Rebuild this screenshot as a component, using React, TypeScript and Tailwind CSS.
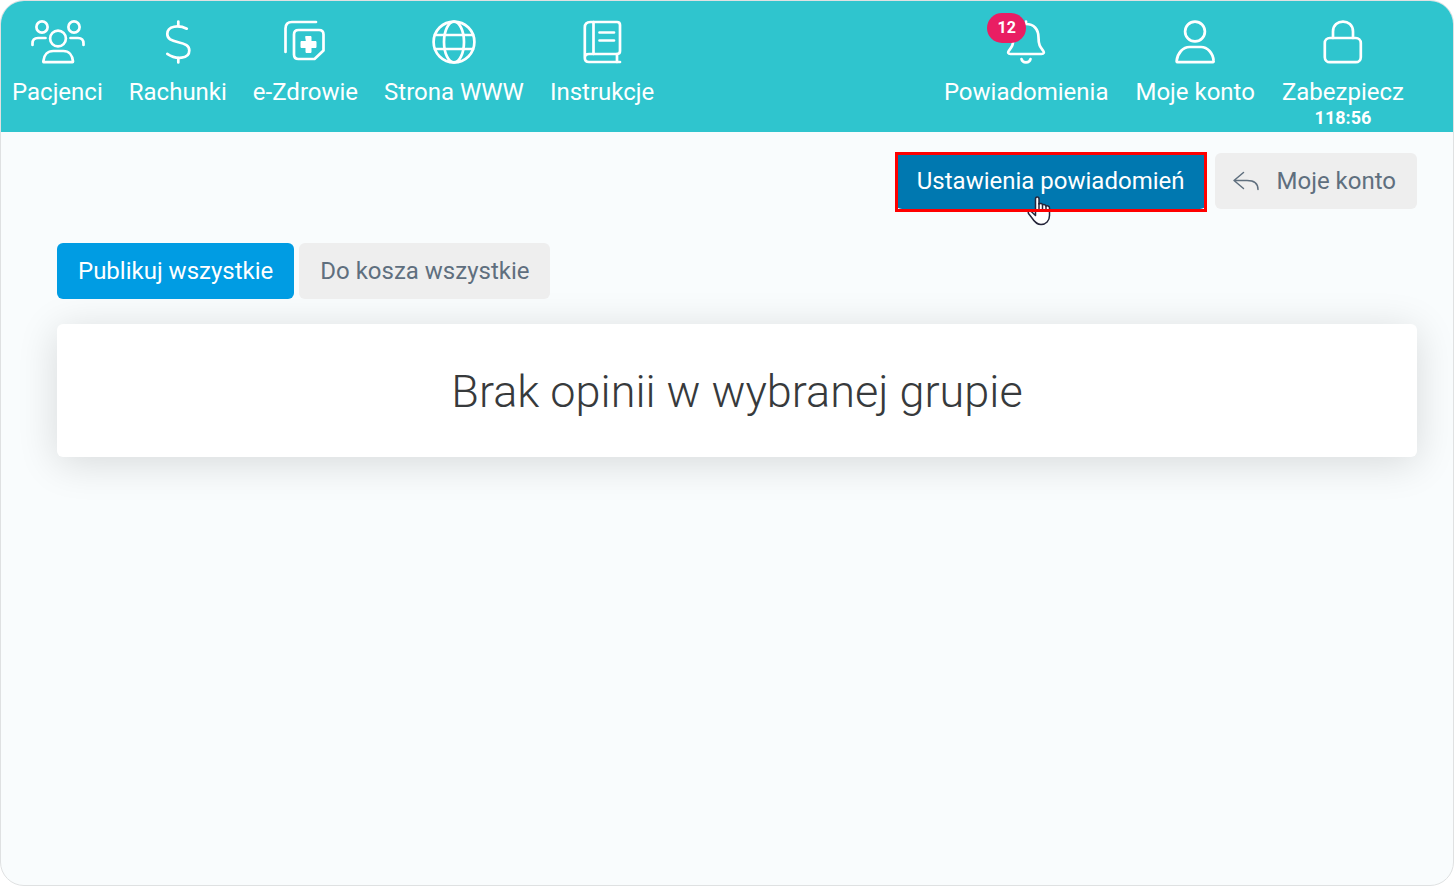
import type { ReactNode } from "react";

function Icon({ children }: { children: ReactNode }) {
  return (
    <svg
      viewBox="0 0 56 44"
      className="block h-11 w-14"
      fill="none"
      stroke="white"
      strokeWidth="2.7"
      strokeLinecap="round"
      strokeLinejoin="round"
      aria-hidden="true"
    >
      {children}
    </svg>
  );
}

const PatientsIcon = (
  <Icon>
    <circle cx="13" cy="7" r="5.6" />
    <circle cx="45" cy="7" r="5.6" />
    <circle cx="29" cy="18.5" r="7.900" />
    <path d="M3.500 25v-1.500q0-5.500 5.500-5.500h7.500M54.500 25v-1.500q0-5.500-5.500-5.500h-7.500" />
    <path d="M14.500 42.200h29q.5 0 .5-.8C43.500 35 39.800 31 34.300 31H24.300c-5.500 0-9.500 4-10 10.400z" />
  </Icon>
);

const DollarIcon = (
  <Icon>
    <path d="M28.300 1.500V6M28.300 38v4.500" />
    <path d="M36.800 8.700C29 5 17.300 5.500 17.300 14c0 5 4 6.700 11 8.200s11 3.300 11 8.300c0 8.500-13 9.500-22 3.300" />
  </Icon>
);

const HealthIcon = (
  <Icon>
    <path d="M8.500 32V8.500Q8.500 2 15 2h24" />
    <path d="M21.500 10H42q4.500 0 4.500 4.500V30.500L37.500 39h-16Q17 39 17 34.500v-20Q17 10 21.500 10z" />
    <path d="M29 16.500h5v5h5v6h-5v5h-5v-5h-5v-6h5z" fill="white" strokeWidth="1" />
  </Icon>
);

const GlobeIcon = (
  <Icon>
    <circle cx="28" cy="22" r="20.400" />
    <ellipse cx="28" cy="22" rx="10" ry="20.400" />
    <path d="M9 15h38M9 29h38" />
  </Icon>
);

const BookIcon = (
  <Icon>
    <path d="M10.800 37.500V7.500Q10.800 2 16.500 2H43q3 0 3 3v26q0 3-3 3H15q-4.200 0-4.200 4t4.200 4h31" />
    <path d="M19.500 2v32M43 34v8M25.500 12.500h14.500M25.500 20.500h14.500" />
  </Icon>
);

const BellIcon = (
  <Icon>
    <path d="M28 1.500V4M28 4c8 0 12.500 5.500 12.500 13.500 0 8 2 10 4.500 13 1.500 2 .8 3.500-1.500 3.500h-31c-2.300 0-3-1.500-1.500-3.500 2.500-3 4.500-5 4.500-13C15.500 9.500 20 4 28 4z" />
    <path d="M23.500 39c1 4.500 8 4.500 9 0" />
  </Icon>
);

const UserIcon = (
  <Icon>
    <circle cx="28" cy="11.500" r="9.900" />
    <path d="M10.500 42.200h35.200c1 0 1-.7.900-1.500C46 33 40.500 27 34 27H22.500C16 27 10.500 33 9.700 40.700c-.1.800-.1 1.500.8 1.500z" />
  </Icon>
);

const LockIcon = (
  <Icon>
    <rect x="9.800" y="18" width="36" height="24.200" rx="5" />
    <path d="M18 18v-6.500c0-13.200 20-13.200 20 0V18" />
  </Icon>
);

function NavItem({
  label,
  icon,
  badge,
  note,
}: {
  label: string;
  icon: ReactNode;
  badge?: string;
  note?: string;
}) {
  return (
    <a href="#" className="flex flex-col items-center text-2xl leading-7 text-white">
      <span className="relative mb-3.5">
        {icon}
        {badge && (
          <span className="absolute -top-[7px] right-7 flex h-[30px] w-[39px] items-center justify-center rounded-full bg-[#e91e63] text-base font-bold">
            {badge}
          </span>
        )}
      </span>
      <span>{label}</span>
      {note && <span className="text-lg leading-6 font-bold">{note}</span>}
    </a>
  );
}

function PointerCursor() {
  return (
    <svg
      viewBox="0 0 24 32"
      className="absolute top-[42px] left-[131px] h-8 w-6"
      fill="white"
      stroke="#25253a"
      strokeWidth="1.500"
      strokeLinejoin="round"
      aria-hidden="true"
    >
      <path d="M8.500 20.500V4c0-2.600 3.500-2.600 3.500 0v5c1-1 3.500-.8 3.500 1 1-.8 3.500-.5 3.500 1.200 1-.7 3.500-.4 3.500 1.800v7.500c0 5.500-3.500 9-8.500 9-4.500 0-6.500-2.500-9-6.500L1.500 18.500c-1-2 1.500-3.300 3-1.700z" />
      <path d="M12 8v7M15.500 10v5M19 11v4" />
    </svg>
  );
}

const button = "flex h-14 items-center rounded-md px-[21px] pb-px text-2xl";

export default function App() {
  return (
    <div
      className="min-h-screen overflow-hidden rounded-3xl border border-[#dfe1e2] bg-[#f9fcfd]"
      style={{ fontFamily: 'Roboto, "Liberation Sans", sans-serif' }}
    >
      <header className="flex items-start justify-between bg-[#2fc5ce] pt-[19px] pr-[49px] pb-0.5 pl-[11px]">
        <nav aria-label="Menu" className="flex gap-[26px]">
          <NavItem label="Pacjenci" icon={PatientsIcon} />
          <NavItem label="Rachunki" icon={DollarIcon} />
          <NavItem label="e-Zdrowie" icon={HealthIcon} />
          <NavItem label="Strona WWW" icon={GlobeIcon} />
          <NavItem label="Instrukcje" icon={BookIcon} />
        </nav>
        <nav aria-label="Konto" className="flex gap-[27px]">
          <NavItem label="Powiadomienia" icon={BellIcon} badge="12" />
          <NavItem label="Moje konto" icon={UserIcon} />
          <NavItem label="Zabezpiecz" icon={LockIcon} note="118:56" />
        </nav>
      </header>

      <main className="pt-[21px] pr-9 pl-14">
        <div className="flex justify-end gap-[9px]">
          <button type="button" className={`${button} relative bg-[#0078b0] text-white`}>
            Ustawienia powiadomień
            <PointerCursor />
            <span className="absolute -inset-x-px -top-px -bottom-[3px] border-3 border-[#ff0000]" />
          </button>
          <button type="button" className={`${button} bg-[#eeeeee] text-[#5f6f7e]`}>
            <svg
              viewBox="0 0 28 20"
              className="-ml-1 mr-[17px] h-5 w-7"
              fill="none"
              stroke="currentColor"
              strokeWidth="1.500"
              strokeLinecap="round"
              strokeLinejoin="round"
              aria-hidden="true"
            >
              <path d="M11.500 1.500L2 9.500l9.500 8M2 9.500h13c7 0 11 2.500 11 9" />
            </svg>
            Moje konto
          </button>
        </div>

        <div className="mt-[34px] flex gap-[5px]">
          <button type="button" className={`${button} bg-[#009ce3] text-white`}>
            Publikuj wszystkie
          </button>
          <button type="button" className={`${button} bg-[#eeeeee] text-[#5f6f7e]`}>
            Do kosza wszystkie
          </button>
        </div>

        <section className="mt-[25px] rounded-md bg-white pt-[37px] pb-[35px] text-center shadow-[0_6px_40px_rgba(0,0,0,0.14)]">
          <h1 className="text-[45px] leading-[61px] font-light text-[#373a3c]">
            Brak opinii w wybranej grupie
          </h1>
        </section>
      </main>
    </div>
  );
}
